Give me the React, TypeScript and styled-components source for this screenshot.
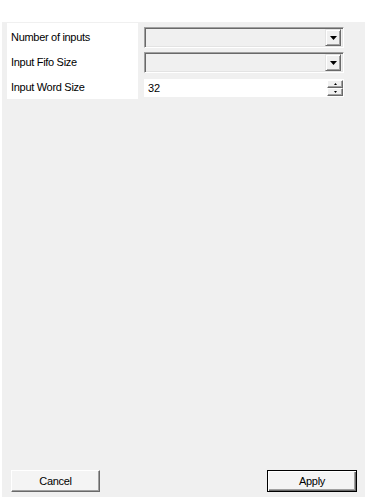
import React, { useState } from "react";
import styled, { createGlobalStyle } from "styled-components";

const GlobalStyle = createGlobalStyle`
    html, body {
        margin: 0;
        padding: 0;
        background: #ffffff;
    }
    body {
        font-family: "Liberation Sans", Arial, sans-serif;
        font-size: 11px;
        letter-spacing: -0.3px;
        color: #000000;
    }
`;

type Field = {
    label: string;
    kind: "combo" | "spin";
    value?: string;
};

const FIELDS: Field[] = [
    { label: "Number of inputs", kind: "combo" },
    { label: "Input Fifo Size", kind: "combo" },
    { label: "Input Word Size", kind: "spin", value: "32" },
];

const ArrowDown = ({ w, h }: { w: number; h: number }) => (
    <svg width={w} height={h} viewBox={`0 0 ${w} ${h}`}>
        <polygon points={`0,0 ${w},0 ${w / 2},${h}`} fill="#000" />
    </svg>
);

const ArrowUp = ({ w, h }: { w: number; h: number }) => (
    <svg width={w} height={h} viewBox={`0 0 ${w} ${h}`}>
        <polygon points={`0,${h} ${w},${h} ${w / 2},0`} fill="#000" />
    </svg>
);

const App = () => {
    const [word, setWord] = useState<string>("32");

    return (
        <>
            <GlobalStyle />
            <Page>
                <Panel>
                    <Form>
                        <LabelColumn>
                            {FIELDS.map((f) => (
                                <Row key={f.label}>{f.label}</Row>
                            ))}
                        </LabelColumn>
                        <ControlColumn>
                            {FIELDS.map((f) => (
                                <Row key={f.label}>
                                    {f.kind === "combo" ? (
                                        <Combo>
                                            <ComboButton>
                                                <ArrowDown w={7} h={4} />
                                            </ComboButton>
                                        </Combo>
                                    ) : (
                                        <SpinBox>
                                            <SpinInput
                                                value={word}
                                                onChange={(e) =>
                                                    setWord(e.target.value)
                                                }
                                            />
                                            <SpinButtons>
                                                <SpinButton>
                                                    <ArrowUp w={3} h={2} />
                                                </SpinButton>
                                                <SpinButton>
                                                    <ArrowDown w={3} h={2} />
                                                </SpinButton>
                                            </SpinButtons>
                                        </SpinBox>
                                    )}
                                </Row>
                            ))}
                        </ControlColumn>
                    </Form>
                    <ButtonBar>
                        <Button>Cancel</Button>
                        <Button primary>Apply</Button>
                    </ButtonBar>
                </Panel>
            </Page>
        </>
    );
};

export default App;

const Page = styled.div`
    width: 368px;
    height: 501px;
    padding: 22px 0 0 2px;
    box-sizing: border-box;
    background: #ffffff;
`;

const Panel = styled.div`
    width: 363px;
    height: 475px;
    background: #f0f0f0;
    display: flex;
    flex-direction: column;
    justify-content: space-between;
    box-sizing: border-box;
    padding: 1px 8px 5px 9px;
`;

const Form = styled.div`
    display: flex;
    gap: 6px;
    margin-left: -4px;
`;

const LabelColumn = styled.div`
    width: 131px;
    height: 76px;
    background: #ffffff;
    padding-top: 2px;
    box-sizing: border-box;
    display: flex;
    flex-direction: column;
`;

const ControlColumn = styled.div`
    width: 200px;
    padding-top: 2px;
    display: flex;
    flex-direction: column;
`;

const Row = styled.div`
    height: 25px;
    display: flex;
    align-items: center;
    padding-left: 4px;
    white-space: nowrap;
    ${ControlColumn} & {
        padding-left: 0;
    }
`;

const Combo = styled.div`
    width: 200px;
    height: 21px;
    box-sizing: border-box;
    background: #f0f0f0;
    border-top: 1px solid #a0a0a0;
    border-left: 1px solid #a0a0a0;
    border-right: 1px solid #ffffff;
    border-bottom: 1px solid #ffffff;
    box-shadow: inset 1px 1px 0 #696969, inset -1px -1px 0 #e3e3e3;
    display: flex;
    justify-content: flex-end;
    align-items: center;
    padding-right: 2px;
`;

const ComboButton = styled.div`
    width: 16px;
    height: 17px;
    box-sizing: border-box;
    background: #f0f0f0;
    border-top: 1px solid #e3e3e3;
    border-left: 1px solid #e3e3e3;
    border-right: 1px solid #696969;
    border-bottom: 1px solid #696969;
    box-shadow: inset 1px 1px 0 #ffffff, inset -1px -1px 0 #a0a0a0;
    display: flex;
    align-items: center;
    justify-content: center;
`;

const SpinBox = styled.div`
    width: 200px;
    height: 18px;
    background: #ffffff;
    display: flex;
    align-items: center;
`;

const SpinInput = styled.input`
    flex: 1;
    min-width: 0;
    height: 16px;
    border: none;
    outline: none;
    padding: 0 0 0 4px;
    background: transparent;
    font-family: "Liberation Sans", Arial, sans-serif;
    font-size: 11px;
    color: #000;
`;

const SpinButtons = styled.div`
    width: 16px;
    display: flex;
    flex-direction: column;
    margin-right: 1px;
`;

const SpinButton = styled.div`
    height: 8px;
    box-sizing: border-box;
    background: #f0f0f0;
    border-top: 1px solid #ffffff;
    border-left: 1px solid #ffffff;
    border-right: 1px solid #696969;
    border-bottom: 1px solid #696969;
    box-shadow: inset -1px -1px 0 #a0a0a0;
    display: flex;
    align-items: center;
    justify-content: center;
`;

const ButtonBar = styled.div`
    display: flex;
    justify-content: space-between;
`;

const Button = styled.button<{ primary?: boolean }>`
    width: ${(p) => (p.primary ? "90px" : "89px")};
    height: 22px;
    box-sizing: border-box;
    padding: 0;
    background: #f4f4f4;
    font-family: "Liberation Sans", Arial, sans-serif;
    font-size: 11px;
    letter-spacing: -0.3px;
    color: #000;
    border-top: 1px solid ${(p) => (p.primary ? "#000" : "#ffffff")};
    border-left: 1px solid ${(p) => (p.primary ? "#000" : "#ffffff")};
    border-right: 1px solid ${(p) => (p.primary ? "#000" : "#696969")};
    border-bottom: 1px solid ${(p) => (p.primary ? "#000" : "#696969")};
    box-shadow: ${(p) =>
        p.primary
            ? "inset 1px 1px 0 #ffffff, inset -1px -1px 0 #696969, inset -2px -2px 0 #a0a0a0"
            : "inset -1px -1px 0 #a0a0a0"};
    cursor: pointer;
`;
